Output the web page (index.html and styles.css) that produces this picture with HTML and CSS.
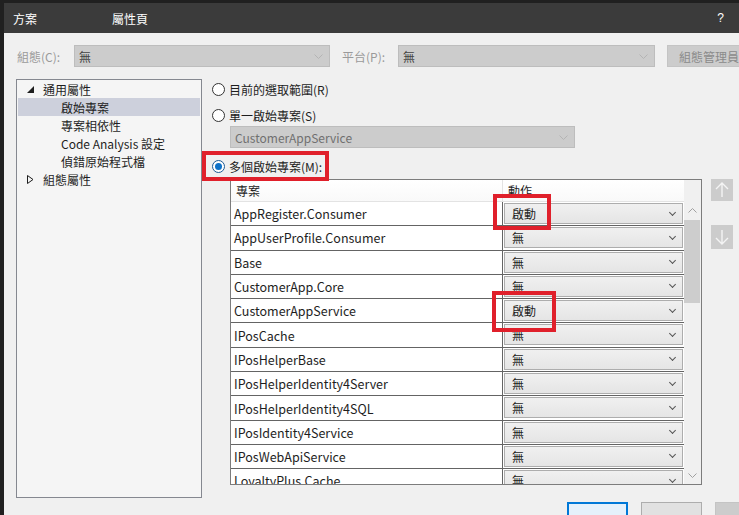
FILE: index.html
```html
<!DOCTYPE html>
<html lang="zh-Hant">
<head>
<meta charset="utf-8">
<title>方案 屬性頁</title>
<link rel="stylesheet" href="styles.css">
</head>
<body>
<div class="window">
  <div class="titlebar">
    <span class="t1">方案</span>
    <span class="t2">屬性頁</span>
    <span class="help">?</span>
  </div>
  <div class="content">
    <div class="configrow">
      <span class="clabel">組態(C):</span>
      <div class="dcombo w1"><span>無</span><svg class="chev" width="9" height="5" viewBox="0 0 9 5"><path d="M0.5 0.5 L4.5 4.5 L8.5 0.5" fill="none" stroke="#b4b4b4" stroke-width="1"/></svg></div>
      <span class="clabel plat">平台(P):</span>
      <div class="dcombo w2"><span>無</span><svg class="chev" width="9" height="5" viewBox="0 0 9 5"><path d="M0.5 0.5 L4.5 4.5 L8.5 0.5" fill="none" stroke="#b4b4b4" stroke-width="1"/></svg></div>
      <div class="cfgbtn">組態管理員</div>
    </div>
    <div class="main">
      <div class="tree">
        <div class="node"><svg class="exp" width="7" height="7" viewBox="0 0 7 7"><polygon points="7,0 7,7 0,7" fill="#1e1e1e"/></svg><span>通用屬性</span></div>
        <div class="node child sel"><span>啟始專案</span></div>
        <div class="node child"><span>專案相依性</span></div>
        <div class="node child"><span>Code Analysis 設定</span></div>
        <div class="node child"><span>偵錯原始程式檔</span></div>
        <div class="node"><svg class="col" width="7" height="9" viewBox="0 0 7 9"><polygon points="0.5,0.5 6,4.5 0.5,8.5" fill="none" stroke="#1e1e1e" stroke-width="1"/></svg><span>組態屬性</span></div>
      </div>
      <div class="right">
        <div class="radio r1"><span class="rb"></span><span>目前的選取範圍(R)</span></div>
        <div class="radio r2"><span class="rb"></span><span>單一啟始專案(S)</span></div>
        <div class="dcombo single"><span class="gray">CustomerAppService</span><svg class="chev" width="9" height="5" viewBox="0 0 9 5"><path d="M0.5 0.5 L4.5 4.5 L8.5 0.5" fill="none" stroke="#b4b4b4" stroke-width="1"/></svg></div>
        <div class="radio r3"><span class="rb on"></span><span>多個啟始專案(M):</span></div>
        <div class="tablewrap">
          <div class="table">
            <div class="tmain">
              <div class="thead">
                <div class="c1">專案</div>
                <div class="c2">動作</div>
              </div>
              <div class="row"><div class="c1">AppRegister.Consumer</div><div class="c2"><div class="cb"><span>啟動</span><i></i></div></div></div>
              <div class="row"><div class="c1">AppUserProfile.Consumer</div><div class="c2"><div class="cb"><span>無</span><i></i></div></div></div>
              <div class="row"><div class="c1">Base</div><div class="c2"><div class="cb"><span>無</span><i></i></div></div></div>
              <div class="row"><div class="c1">CustomerApp.Core</div><div class="c2"><div class="cb"><span>無</span><i></i></div></div></div>
              <div class="row"><div class="c1">CustomerAppService</div><div class="c2"><div class="cb"><span>啟動</span><i></i></div></div></div>
              <div class="row"><div class="c1">IPosCache</div><div class="c2"><div class="cb"><span>無</span><i></i></div></div></div>
              <div class="row"><div class="c1">IPosHelperBase</div><div class="c2"><div class="cb"><span>無</span><i></i></div></div></div>
              <div class="row"><div class="c1">IPosHelperIdentity4Server</div><div class="c2"><div class="cb"><span>無</span><i></i></div></div></div>
              <div class="row"><div class="c1">IPosHelperIdentity4SQL</div><div class="c2"><div class="cb"><span>無</span><i></i></div></div></div>
              <div class="row"><div class="c1">IPosIdentity4Service</div><div class="c2"><div class="cb"><span>無</span><i></i></div></div></div>
              <div class="row"><div class="c1">IPosWebApiService</div><div class="c2"><div class="cb"><span>無</span><i></i></div></div></div>
              <div class="row"><div class="c1">LoyaltyPlus.Cache</div><div class="c2"><div class="cb"><span>無</span><i></i></div></div></div>
            </div>
            <div class="scrollbar">
              <div class="corner"></div>
              <div class="sbtn"><svg width="9" height="5" viewBox="0 0 9 5"><path d="M0.5 4.5 L4.5 0.5 L8.5 4.5" fill="none" stroke="#a0a0a0" stroke-width="1"/></svg></div>
              <div class="thumb"></div>
              <div class="track"></div>
              <div class="sbtn"><svg width="9" height="5" viewBox="0 0 9 5"><path d="M0.5 0.5 L4.5 4.5 L8.5 0.5" fill="none" stroke="#a0a0a0" stroke-width="1"/></svg></div>
            </div>
          </div>
          <div class="side">
            <div class="mbtn"><svg width="14" height="16" viewBox="0 0 14 16"><path d="M7 15 L7 1 M1 7 L7 1 L13 7" fill="none" stroke="#f4f4f4" stroke-width="1.4"/></svg></div>
            <div class="mbtn down"><svg width="14" height="16" viewBox="0 0 14 16"><path d="M7 1 L7 15 M1 9 L7 15 L13 9" fill="none" stroke="#f4f4f4" stroke-width="1.4"/></svg></div>
          </div>
        </div>
      </div>
    </div>
    <div class="buttons">
      <div class="btn primary"></div>
      <div class="btn"></div>
      <div class="btn third"></div>
    </div>
  </div>
  <div class="redbox rb1"></div>
  <div class="redbox rb2"></div>
  <div class="redbox rb3"></div>
</div>
</body>
</html>
```

FILE: styles.css
```css
* { box-sizing: border-box; }
html, body { margin: 0; padding: 0; }
body {
  width: 739px;
  height: 515px;
  overflow: hidden;
  background: #202020;
  font-family: "Noto Sans CJK TC", "Noto Sans", sans-serif;
  font-size: 12px;
  color: #1e1e1e;
}
.window {
  position: relative;
  width: 739px;
  height: 515px;
  padding: 3px 0 0 4px;
  background: #202020;
  overflow: hidden;
}
.titlebar {
  height: 30px;
  background: #3b3b3b;
  color: #ffffff;
  display: flex;
  align-items: center;
  font-size: 12px;
}
.t1 { margin-left: 9px; }
.t2 { margin-left: 75px; }
.help { margin-left: auto; margin-right: 15px; font-family: "Liberation Sans", sans-serif; font-size: 12px; }

.content {
  background: #f0f0f0;
  height: 482px;
  padding: 12px 0 0 12px;
  overflow: hidden;
}
.configrow {
  display: flex;
  align-items: center;
  height: 22px;
  white-space: nowrap;
}
.clabel { color: #9a9a9a; margin-left: 1px; width: 57px; flex-shrink: 0; }
.clabel.plat { margin-left: 12px; width: 56px; }
.dcombo {
  height: 22px;
  background: #cccccc;
  border: 1px solid #bdbdbd;
  display: flex;
  align-items: center;
  padding: 0 0 0 4px;
  color: #444;
  flex-shrink: 0;
}
.dcombo .chev { margin-left: auto; margin-right: 6px; }
.w1 { width: 256px; }
.w2 { width: 257px; }
.cfgbtn {
  margin-left: 12px;
  height: 22px;
  width: 90px;
  flex-shrink: 0;
  background: #cccccc;
  border: 1px solid #c4c4c4;
  color: #8a8a8a;
  display: flex;
  align-items: center;
  padding-left: 11px;
}

.main {
  display: flex;
  margin-top: 12px;
  height: 419px;
}
.tree {
  width: 186px;
  height: 419px;
  background: #f5f5f5;
  border: 1px solid #858890;
  flex-shrink: 0;
  padding: 0 1px;
}
.node {
  height: 18px;
  display: flex;
  align-items: center;
  padding-left: 9px;
  white-space: nowrap;
  color: #1e1e1e;
}
.node svg { width: 7px; flex-shrink: 0; }
.node .exp { margin-right: 9px; }
.node .col { margin-right: 9px; }
.node.child { padding-left: 43px; }
.node.sel { background: #cdd0dc; }

.right {
  margin-left: 9px;
  display: flex;
  flex-direction: column;
  white-space: nowrap;
}
.radio {
  display: flex;
  align-items: center;
  height: 20px;
}
.rb {
  width: 13px;
  height: 13px;
  border: 1px solid #333333;
  border-radius: 50%;
  background: #ffffff;
  margin-left: 1px;
  margin-right: 4px;
  position: relative;
  flex-shrink: 0;
}
.rb.on { border-color: #1c5b94; }
.rb.on::after {
  content: "";
  position: absolute;
  left: 2px; top: 2px;
  width: 7px; height: 7px;
  border-radius: 50%;
  background: #0f72c8;
}
.r2 { margin-top: 6px; }
.dcombo.single {
  margin-top: 1px;
  margin-left: 19px;
  width: 345px;
  padding-left: 4px;
}
.gray { color: #707070; }
.r3 { margin-top: 8px; }

.tablewrap {
  display: flex;
  margin-top: 3px;
  margin-left: 19px;
}
.table {
  width: 472px;
  height: 306px;
  border: 1px solid #7c7c7c;
  display: flex;
  overflow: hidden;
  background: #ffffff;
}
.tmain { width: 453px; flex-shrink: 0; }
.thead {
  height: 22px;
  display: flex;
  background: linear-gradient(#ffffff, #f9f9f9);
  border-bottom: 1px solid #e3e3e3;
}
.thead .c1 {
  width: 272px;
  border-right: 1px solid #e3e3e3;
  padding-left: 5px;
  display: flex;
  align-items: center;
}
.thead .c2 {
  flex: 1;
  padding-left: 5px;
  display: flex;
  align-items: center;
}
.row {
  height: 24.3px;
  display: flex;
  border-bottom: 1px solid #646464;
}
.row .c1 {
  width: 272px;
  border-right: 1px solid #646464;
  padding-left: 3px;
  display: flex;
  align-items: center;
  font-size: 12.5px;
}
.row .c2 {
  flex: 1;
  padding: 1px 1px 1px 1px;
}
.cb {
  height: 21px;
  border: 1px solid #adadad;
  background: linear-gradient(#f0f0f0, #e5e5e5);
  display: flex;
  align-items: center;
  padding-left: 7px;
}
.cb i {
  margin-left: auto;
  margin-right: 7px;
  width: 5px;
  height: 5px;
  border-right: 1.3px solid #555;
  border-bottom: 1.3px solid #555;
  transform: rotate(45deg);
  margin-top: -3px;
}
.scrollbar {
  width: 17px;
  flex-shrink: 0;
  background: #f0f0f0;
  display: flex;
  flex-direction: column;
}
.corner { height: 22px; background: #f0f0f0; }
.sbtn {
  height: 17px;
  display: flex;
  align-items: center;
  justify-content: center;
  flex-shrink: 0;
}
.thumb { height: 83px; margin: 1px 1px 0 0; background: #cdcdcd; flex-shrink: 0; }
.track { flex: 1; }

.side {
  margin-left: 9px;
  display: flex;
  flex-direction: column;
}
.mbtn {
  width: 22px;
  height: 22px;
  background: #cccccc;
  display: flex;
  align-items: center;
  justify-content: center;
}
.mbtn.down { margin-top: 24px; height: 24px; }

.buttons {
  display: flex;
  gap: 13px;
  margin-top: 4px;
  margin-left: 551px;
}
.btn {
  width: 61px;
  height: 24px;
  flex-shrink: 0;
  background: #e1e1e1;
  border: 1px solid #adadad;
}
.btn.primary { border: 2px solid #0078d7; background: #e5f1fb; }
.btn.third { background: #cccccc; border-color: #c4c4c4; }

.redbox {
  position: absolute;
  border: 4px solid #e0202b;
}
.rb1 { left: 202px; top: 151px; width: 127px; height: 30px; }
.rb2 { left: 493px; top: 194px; width: 58px; height: 36px; }
.rb3 { left: 492px; top: 291px; width: 64px; height: 41px; }
```
